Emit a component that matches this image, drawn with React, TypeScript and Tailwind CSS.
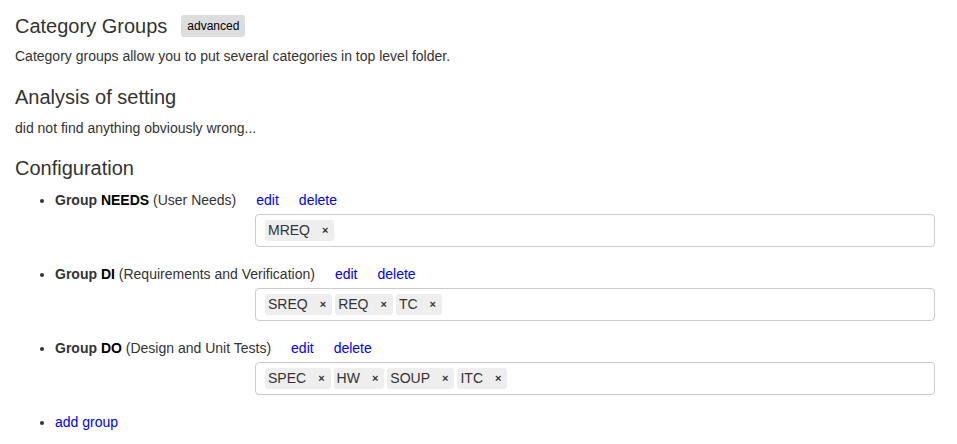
import React from 'react';

interface Group {
  code: string;
  name: string;
  tags: string[];
}

const groups: Group[] = [
  { code: 'NEEDS', name: 'User Needs', tags: ['MREQ'] },
  { code: 'DI', name: 'Requirements and Verification', tags: ['SREQ', 'REQ', 'TC'] },
  { code: 'DO', name: 'Design and Unit Tests', tags: ['SPEC', 'HW', 'SOUP', 'ITC'] },
];

const Tag: React.FC<{ label: string }> = ({ label }) => (
  <span className="flex items-center h-[21px] bg-[#eeeeee] rounded-[3px] pl-[3px] pr-[6px] text-[14px] leading-[21px] text-[#333]">
    {label}
    <span className="ml-[12px] text-[11px] font-bold leading-none text-[#333]">×</span>
  </span>
);

export default function App() {
  return (
    <div className="min-h-screen bg-white pl-[15px] text-[#333] font-['Liberation_Sans',Arial,sans-serif] text-[14px] leading-[18px]">
      {/* Header */}
      <div className="pt-[14px] flex items-center h-[37px]">
        <h3 className="text-[20px] leading-[22px]">Category Groups</h3>
        <span className="ml-[14px] h-[22px] px-[6px] rounded-[3px] bg-[#dddddd] text-[12px] leading-[22px] text-black">
          advanced
        </span>
      </div>
      <p className="mt-[10px]">Category groups allow you to put several categories in top level folder.</p>

      <h3 className="mt-[21px] text-[20px] leading-[22px]">Analysis of setting</h3>
      <p className="mt-[11px]">did not find anything obviously wrong...</p>

      <h3 className="mt-[20px] text-[20px] leading-[22px]">Configuration</h3>
      <ul className="list-disc pl-[40px] mt-[12px]">
        {groups.map((g, i) => (
          <li key={g.code} className={i > 0 ? 'mt-[18px]' : ''}>
            <div>
              <b className="font-bold">Group <span className="text-black">{g.code}</span></b> ({g.name})
              <a href="#" className="ml-[20px] text-[#0000ee]">edit</a>
              <a href="#" className="ml-[20px] text-[#0000ee]">delete</a>
            </div>
            <div className="ml-[200px] mt-[5px] w-[680px] h-[33px] border border-[#cccccc] rounded-[4px] pl-[9px] flex items-center gap-[3px]">
              {g.tags.map((t) => (
                <Tag key={t} label={t} />
              ))}
            </div>
          </li>
        ))}
        <li className="mt-[18px]">
          <a href="#" className="text-[#0000ee]">add group</a>
        </li>
      </ul>
    </div>
  );
}
